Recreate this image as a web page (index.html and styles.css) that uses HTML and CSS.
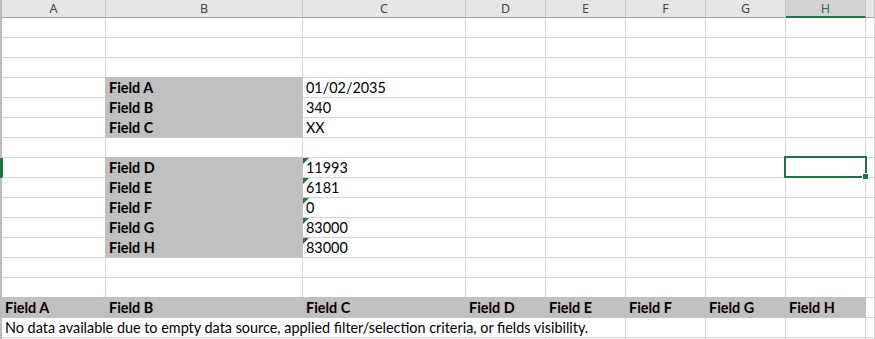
FILE: index.html
```html
<!DOCTYPE html>
<html lang="en">
<head>
  <meta charset="UTF-8">
  <title>Sheet1</title>
  <link rel="stylesheet" href="styles.css">
</head>
<body>

  <div class="sheet">
    <div class="row head">
      <div class="rh"></div>
      <div class="ch">A</div><div class="ch">B</div><div class="ch">C</div><div class="ch">D</div>
      <div class="ch">E</div><div class="ch">F</div><div class="ch">G</div><div class="ch on">H</div><div class="ch"></div>
    </div>

    <div class="row"><div class="rh"></div><div class="c"></div><div class="c"></div><div class="c"></div><div class="c"></div><div class="c"></div><div class="c"></div><div class="c"></div><div class="c"></div><div class="c"></div></div>
    <div class="row"><div class="rh"></div><div class="c"></div><div class="c"></div><div class="c"></div><div class="c"></div><div class="c"></div><div class="c"></div><div class="c"></div><div class="c"></div><div class="c"></div></div>
    <div class="row"><div class="rh"></div><div class="c"></div><div class="c"></div><div class="c"></div><div class="c"></div><div class="c"></div><div class="c"></div><div class="c"></div><div class="c"></div><div class="c"></div></div>

    <div class="row"><div class="rh"></div><div class="c"></div><div class="c lbl">Field A</div><div class="c">01/02/2035</div><div class="c"></div><div class="c"></div><div class="c"></div><div class="c"></div><div class="c"></div><div class="c"></div></div>
    <div class="row"><div class="rh"></div><div class="c"></div><div class="c lbl">Field B</div><div class="c">340</div><div class="c"></div><div class="c"></div><div class="c"></div><div class="c"></div><div class="c"></div><div class="c"></div></div>
    <div class="row"><div class="rh"></div><div class="c"></div><div class="c lbl">Field C</div><div class="c">XX</div><div class="c"></div><div class="c"></div><div class="c"></div><div class="c"></div><div class="c"></div><div class="c"></div></div>

    <div class="row"><div class="rh"></div><div class="c"></div><div class="c"></div><div class="c"></div><div class="c"></div><div class="c"></div><div class="c"></div><div class="c"></div><div class="c"></div><div class="c"></div></div>

    <div class="row"><div class="rh on"></div><div class="c"></div><div class="c lbl">Field D</div><div class="c txt">11993</div><div class="c"></div><div class="c"></div><div class="c"></div><div class="c"></div><div class="c"></div><div class="c"></div></div>
    <div class="row"><div class="rh"></div><div class="c"></div><div class="c lbl">Field E</div><div class="c txt">6181</div><div class="c"></div><div class="c"></div><div class="c"></div><div class="c"></div><div class="c"></div><div class="c"></div></div>
    <div class="row"><div class="rh"></div><div class="c"></div><div class="c lbl">Field F</div><div class="c txt">0</div><div class="c"></div><div class="c"></div><div class="c"></div><div class="c"></div><div class="c"></div><div class="c"></div></div>
    <div class="row"><div class="rh"></div><div class="c"></div><div class="c lbl">Field G</div><div class="c txt">83000</div><div class="c"></div><div class="c"></div><div class="c"></div><div class="c"></div><div class="c"></div><div class="c"></div></div>
    <div class="row"><div class="rh"></div><div class="c"></div><div class="c lbl">Field H</div><div class="c txt">83000</div><div class="c"></div><div class="c"></div><div class="c"></div><div class="c"></div><div class="c"></div><div class="c"></div></div>

    <div class="row"><div class="rh"></div><div class="c"></div><div class="c"></div><div class="c"></div><div class="c"></div><div class="c"></div><div class="c"></div><div class="c"></div><div class="c"></div><div class="c"></div></div>
    <div class="row"><div class="rh"></div><div class="c"></div><div class="c"></div><div class="c"></div><div class="c"></div><div class="c"></div><div class="c"></div><div class="c"></div><div class="c"></div><div class="c"></div></div>

    <div class="row"><div class="rh"></div>
      <div class="c th">Field A</div><div class="c th">Field B</div><div class="c th">Field C</div><div class="c th">Field D</div>
      <div class="c th">Field E</div><div class="c th">Field F</div><div class="c th">Field G</div><div class="c th">Field H</div><div class="c"></div>
    </div>
    <div class="row"><div class="rh"></div>
      <div class="c note">No data available due to empty data source, applied filter/selection criteria, or fields visibility.</div>
      <div class="c"></div><div class="c"></div><div class="c"></div><div class="c"></div>
    </div>
    <div class="row"><div class="rh"></div><div class="c"></div><div class="c"></div><div class="c"></div><div class="c"></div><div class="c"></div><div class="c"></div><div class="c"></div><div class="c"></div><div class="c"></div></div>

    <div class="selection"><span class="handle"></span></div>
  </div>

</body>
</html>
```

FILE: styles.css
```css
body {
  margin: 0;
  background: #fff;
  font-family: Lato, "Open Sans", sans-serif;
  font-size: 14.4px;
  color: #000;
  overflow: hidden;
}

.sheet {
  position: relative;
  height: 339px;
  overflow: hidden;
}

.row {
  display: grid;
  grid-template-columns: 2px 104px 197px 163px 80px 80px 80px 80px 80px 1fr;
  height: 20px;
}

.rh {
  background: #bcbcbc;
}

.rh.on {
  background: #217346;
  width: 3px;
}

.c {
  box-sizing: border-box;
  height: 20px;
  padding: 0 3px;
  line-height: 19px;
  border-right: 1px solid #d4d4d4;
  border-bottom: 1px solid #d4d4d4;
  white-space: nowrap;
  overflow: hidden;
}

/* column letters */
.row.head {
  height: 18px;
}

.ch {
  box-sizing: border-box;
  height: 18px;
  background: #e6e6e6;
  border-right: 1px solid #c6c6c6;
  border-bottom: 1px solid #a0a0a0;
  text-align: center;
  font-family: "Noto Sans", sans-serif;
  font-size: 12.5px;
  line-height: 17px;
  color: #444;
}

.ch.on {
  background: #d2d2d2;
  border-bottom: 2px solid #217346;
  color: #217346;
}

/* grey label cells hide the grid lines around them */
.lbl,
.th {
  background: #c0c0c0;
  border-color: #c0c0c0;
  box-shadow: -1px -1px 0 #c0c0c0;
  font-weight: bold;
}

.txt {
  position: relative;
}

.txt::before {
  content: "";
  position: absolute;
  left: 0;
  top: 0;
  border-top: 6px solid #1e7b34;
  border-right: 6px solid transparent;
}

.note {
  grid-column: span 5;
  overflow: visible;
}

.selection {
  position: absolute;
  left: 784px;
  top: 156px;
  width: 83px;
  height: 22px;
  box-sizing: border-box;
  border: 2px solid #217346;
}

.handle {
  position: absolute;
  right: -4px;
  bottom: -4px;
  width: 5px;
  height: 5px;
  background: #217346;
  border: 1px solid #fff;
}
```
